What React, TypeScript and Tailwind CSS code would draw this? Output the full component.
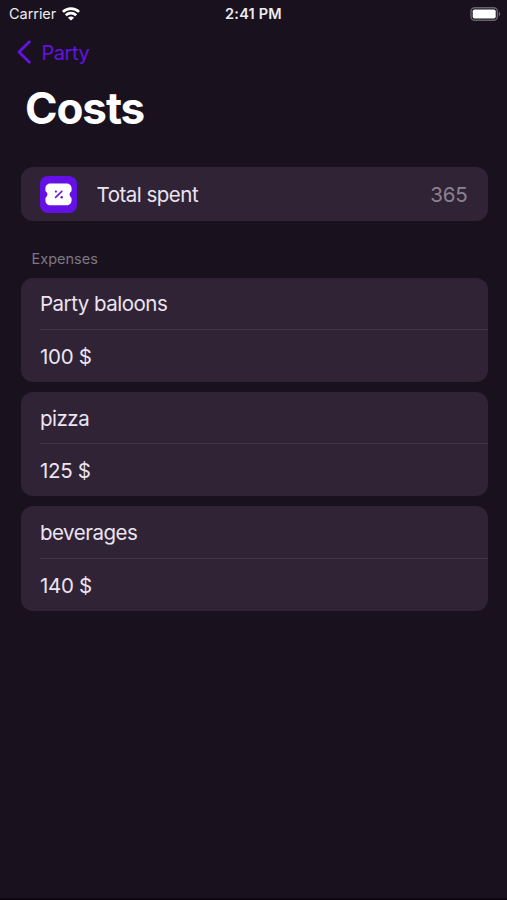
import React from 'react';

interface Expense {
  id: number;
  name: string;
  amount: number;
}

const expenses: Expense[] = [
  { id: 1, name: 'Party baloons', amount: 100 },
  { id: 2, name: 'pizza', amount: 125 },
  { id: 3, name: 'beverages', amount: 140 },
];

const WifiIcon = () => (
  <svg className="w-[18px] h-[14px]" viewBox="0 0 18 14" fill="none" stroke="#fff" strokeWidth="2.7">
    <path d="M0.9 4.9C5.4 0.4 12.6 0.4 17.1 4.9" />
    <path d="M3.8 8.2C6.7 5.5 11.3 5.5 14.2 8.2" />
    <path d="M9 13.6L5.9 10.7C7.6 9.2 10.4 9.2 12.1 10.7Z" fill="#fff" stroke="none" />
  </svg>
);

const BatteryIcon = () => (
  <svg className="w-[31px] h-[14px]" viewBox="0 0 31 14" fill="none">
    <rect x="1" y="0.7" width="26.4" height="12.6" rx="3.8" stroke="#67626b" strokeWidth="1.4" />
    <rect x="2.7" y="2.4" width="23" height="9.2" rx="1.8" fill="#fff" />
    <path d="M28.8 4.8C30.8 5.6 30.8 8.4 28.8 9.2Z" fill="#67626b" />
  </svg>
);

const CouponIcon = () => (
  <svg className="w-[27px] h-[23px]" viewBox="0 0 27 23" fill="none">
    <path
      d="M5.8 0.6H21.2C24.5 0.6 26.6 2.6 26.6 5.6V7.3C26.6 8.2 26.3 8.7 25.7 9.1C24.2 10.2 24.2 12.8 25.7 13.9C26.3 14.3 26.6 14.8 26.6 15.7V17.2C26.6 20.2 24.5 22.2 21.2 22.2H5.8C2.5 22.2 0.4 20.2 0.4 17.2V15.7C0.4 14.8 0.7 14.3 1.3 13.9C2.8 12.8 2.8 10.2 1.3 9.1C0.7 8.7 0.4 8.2 0.4 7.3V5.6C0.4 2.6 2.5 0.6 5.8 0.6Z"
      fill="#fff"
    />
    <path d="M10.6 14.4L16.9 8.2" stroke="#6510e6" strokeWidth="1.6" strokeLinecap="round" />
    <circle cx="10.9" cy="8.6" r="1.1" fill="#6510e6" />
    <circle cx="16.7" cy="14.2" r="1.2" fill="#6510e6" />
  </svg>
);

const StatusBar = () => (
  <div className="h-[27px] grid grid-cols-3 items-center pl-[9px] pr-[6px] text-[#eeebf0]">
    <div className="flex items-center gap-[6px]">
      <span className="text-[14.5px] tracking-[-0.05px]">Carrier</span>
      <WifiIcon />
    </div>
    <span className="pr-[3px] text-center text-[14.5px] font-semibold tracking-[0.2px]">2:41 PM</span>
    <div className="flex justify-end">
      <BatteryIcon />
    </div>
  </div>
);

const ExpenseCard: React.FC<{ expense: Expense }> = ({ expense }) => (
  <div className="h-[104.5px] flex flex-col rounded-[12px] bg-[#2f2335] pl-[19.5px]">
    <div className="h-[52.5px] flex items-center border-b border-[#42374a] pt-[3px]">{expense.name}</div>
    <div className="flex-1 flex items-center pt-[2.6px] tracking-[-0.3px]">{expense.amount} $</div>
  </div>
);

const App = () => {
  const total = expenses.reduce((sum, e) => sum + e.amount, 0);

  return (
    <div className="w-full h-[900px] overflow-hidden bg-[#19121e] border-b-2 border-[#0c080e] font-[Inter,sans-serif] text-[20.5px] text-[#ece4f2]">
      <StatusBar />

      <button className="h-[50px] flex items-center gap-[10px] pl-[16.5px] text-[#6413e0]">
        <svg className="w-[15px] h-[24px]" viewBox="0 0 15 24" fill="none" stroke="currentColor" strokeWidth="2.8" strokeLinecap="round" strokeLinejoin="round">
          <path d="M12.4 1.8L2 12L12.4 22.2" />
        </svg>
        <span className="pt-[2px] text-[20px] tracking-[-0.45px]">Party</span>
      </button>

      <h1 className="h-[62px] pl-[25px] text-[44px] leading-[62px] font-bold tracking-[-1.1px] text-white">Costs</h1>

      <main className="pl-[20.5px] pr-[19.5px] pt-[28px] tracking-[-0.5px]">
        <div className="h-[54px] flex items-center rounded-[12px] bg-[#2f2335] pl-[19.5px] pr-[20px]">
          <div className="w-[37px] h-[37px] flex items-center justify-center rounded-[8px] bg-[#6510e6]">
            <CouponIcon />
          </div>
          <span className="ml-[19.5px] pt-[2px]">Total spent</span>
          <span className="ml-auto pt-[2px] tracking-[-0.2px] text-[#8b8192]">{total}</span>
        </div>

        <h2 className="mt-[28px] mb-[8.5px] pl-[11px] text-[14.5px] leading-[20px] tracking-[0px] text-[#7d7782]">Expenses</h2>

        <div className="space-y-[9.8px]">
          {expenses.map((expense) => (
            <ExpenseCard key={expense.id} expense={expense} />
          ))}
        </div>
      </main>
    </div>
  );
};

export default App;
